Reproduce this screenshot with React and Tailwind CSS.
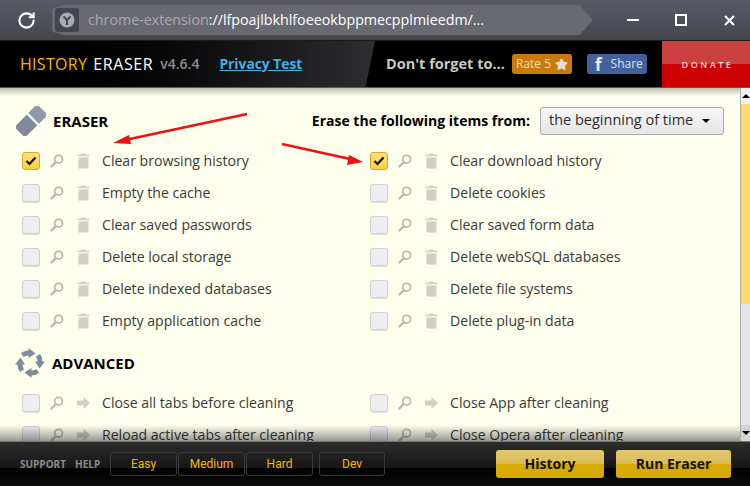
import React from "react";
import { RotateCw, Star } from "lucide-react";

const eraserItems = [
  ["Clear browsing history", "Clear download history"],
  ["Empty the cache", "Delete cookies"],
  ["Clear saved passwords", "Clear saved form data"],
  ["Delete local storage", "Delete webSQL databases"],
  ["Delete indexed databases", "Delete file systems"],
  ["Empty application cache", "Delete plug-in data"],
];

const advancedItems = [
  ["Close all tabs before cleaning", "Close App after cleaning"],
  ["Reload active tabs after cleaning", "Close Opera after cleaning"],
];

const SearchIcon = () => (
  <svg width="14" height="14" viewBox="0 0 14 14" fill="none" className="shrink-0">
    <circle cx="8.6" cy="5.2" r="3.9" stroke="#b8b8ac" strokeWidth="1.7" />
    <path d="M5.6 8.2L1.4 12.6" stroke="#b8b8ac" strokeWidth="2.2" strokeLinecap="round" />
  </svg>
);

const TrashIcon = () => (
  <svg width="13" height="16" viewBox="0 0 13 16" fill="#cfcfc5" className="shrink-0">
    <path d="M4.5 0.5h4l0.6 1.2h3.4v1.6h-12v-1.6h3.4z" />
    <path d="M1.5 4.4h10v11.1h-10z" />
  </svg>
);

const ArrowIcon = () => (
  <svg width="13" height="14" viewBox="0 0 13 14" fill="#cfcfc5" className="shrink-0">
    <path d="M6.5 1L13 7l-6.500 6V9.500H0v-5h6.500z" />
  </svg>
);

const Checkbox = ({ checked }) =>
  checked ? (
    <div className="flex h-[18px] w-[18px] shrink-0 items-center justify-center rounded-[3px] border border-[#d8a72a] bg-gradient-to-b from-[#ffe27a] to-[#ffcf3c]">
      <svg width="12" height="10" viewBox="0 0 12 10" fill="none">
        <path d="M1.500 5l3 3 6-6.500" stroke="#111" strokeWidth="2.200" />
      </svg>
    </div>
  ) : (
    <div className="h-[18px] w-[18px] shrink-0 rounded-[3px] border border-[#cfcfcf] bg-[#eeeef0] shadow-[0_1px_1px_rgba(0,0,0,0.12)]" />
  );

const Row = ({ label, checked, advanced }) => (
  <div className="flex h-8 w-[348px] items-center">
    <Checkbox checked={checked} />
    <div className="ml-[10px] flex w-[13px] justify-center">
      <SearchIcon />
    </div>
    <div className="ml-[14px] flex w-[13px] justify-center">
      {advanced ? <ArrowIcon /> : <TrashIcon />}
    </div>
    <span className="ml-3 whitespace-nowrap pt-px text-[14.1px] leading-none text-[#3a3a3a]">
      {label}
    </span>
  </div>
);

const EraserIcon = () => (
  <svg width="30" height="30" viewBox="0 0 30 30" className="shrink-0">
    <g transform="rotate(-45 15 15)">
      <rect x="-1" y="7.500" width="32" height="15" rx="3" fill="#7f8b9c" />
      <rect x="18.400" y="7.500" width="12.600" height="15" rx="3" fill="#8e99a9" />
      <rect x="16.500" y="6.500" width="2.200" height="17" fill="#fffff0" />
    </g>
  </svg>
);

const CycleIcon = () => (
  <svg width="32" height="32" viewBox="0 0 32 32" fill="#7d8b9c" className="shrink-0">
    {[0, 90, 180, 270].map((angle) => (
      <path
        key={angle}
        transform={`rotate(${angle} 16 16)`}
        d="M7 6Q10 3.500 14.500 3.500L14.500 1L21.500 6.500L14.500 11L14.500 8.500Q12 8.500 9.500 10z"
      />
    ))}
  </svg>
);

const BrowserBar = () => (
  <div className="flex h-10 items-center bg-gradient-to-b from-[#5a5a64] to-[#45454f]">
    <div className="flex w-[52px] justify-center">
      <RotateCw size={19} color="#ffffff" strokeWidth={2.600} />
    </div>
    <div className="flex h-[30px] w-[541px] items-center bg-[#696972] pl-[3px] [clip-path:polygon(0_12%,2%_0,97.500%_0,100%_50%,97.500%_100%,2%_100%,0_88%)]">
      <div className="flex h-6 w-6 items-center justify-center rounded-[3px] bg-[#44454f]">
        <svg width="16" height="16" viewBox="0 0 16 16">
          <circle cx="8" cy="8" r="7.500" fill="#a9aab2" />
          <path d="M4.500 4.500L8 8l3.500-3.500M8 8v5" stroke="#44454f" strokeWidth="2" fill="none" />
        </svg>
      </div>
      <span className="ml-[9px] whitespace-nowrap text-[14.25px] leading-none text-[#a9a9b0]">
        chrome-extension
        <span className="text-white">://lfpoajlbkhlfoeeokbppmecpplmieedm/...</span>
      </span>
    </div>
    <div className="ml-[34px] h-[2px] w-3 bg-white" />
    <div className="ml-9 h-3 w-3 border-2 border-white" />
    <svg width="11" height="11" viewBox="0 0 11 11" className="ml-[37px]">
      <path d="M1 1l9 9M10 1l-9 9" stroke="#fff" strokeWidth="2" />
    </svg>
  </div>
);

const Header = () => (
  <div className="flex h-12 items-stretch border-t border-b border-t-[#1c1c1c] border-b-[#5a5a5a] bg-black">
    <div className="flex w-[375px] items-center bg-gradient-to-r from-black to-[#2e2e32] pl-5 [clip-path:polygon(0_0,100%_0,97.500%_100%,0_100%)]">
      <span className="whitespace-nowrap text-[16px] leading-none tracking-[0.3px] text-[#f2b800]">HISTORY</span>
      <span className="ml-[6px] whitespace-nowrap text-[16px] leading-none tracking-[0.6px] text-white">ERASER</span>
      <span className="ml-[7px] whitespace-nowrap text-[14px] font-semibold leading-none text-[#8e8e8e]">v4.6.4</span>
      <a className="ml-5 whitespace-nowrap text-[13.8px] font-bold leading-none text-[#3fb1e3] underline">Privacy Test</a>
    </div>
    <div className="flex flex-1 items-center">
      <span className="ml-[11px] w-[126px] whitespace-nowrap text-[14.5px] font-bold leading-none text-[#c9c9bd]">Don't forget to...</span>
      <div className="flex h-5 w-[60px] items-center justify-center gap-1 rounded-[3px] bg-[#c87a0c] text-[12px] leading-none text-[#f1dcb6]">
        Rate 5
        <Star size={13} fill="#eadfce" color="#eadfce" />
      </div>
      <div className="ml-[15px] flex h-5 w-[60px] items-center rounded-[3px] bg-[#41609c] pl-2 text-[12px] leading-none text-[#dbe3f0]">
        <span className="text-[17px] font-bold leading-none text-[#e8edf5]">f</span>
        <span className="ml-[9px]">Share</span>
      </div>
      <div className="ml-[15px] flex h-full w-[88px] items-center justify-center bg-[linear-gradient(to_bottom,#cc4040_50%,#cc0000_50%)] pl-[3px] text-[9px] font-semibold leading-none tracking-[2.5px] text-[#ecdcdc]">
        DONATE
      </div>
    </div>
  </div>
);

const Scrollbar = () => (
  <div className="flex w-[10px] shrink-0 flex-col border-l border-[#b0b0b0] bg-[#e6e6e6]">
    <div className="flex h-4 items-center justify-center bg-[#f0f0f0]">
      <div className="h-0 w-0 border-x-[4px] border-b-[4px] border-x-transparent border-b-black" />
    </div>
    <div className="h-[200px] bg-[#ffd966]" />
    <div className="flex-1" />
    <div className="flex h-4 items-center justify-center bg-[#d4d4d4]">
      <div className="h-0 w-0 border-x-[4px] border-t-[4px] border-x-transparent border-t-black" />
    </div>
  </div>
);

const Content = () => (
  <div className="relative flex h-[353px] overflow-hidden bg-[#ffffee]">
    <div className="min-w-0 flex-1 overflow-hidden">
      <div className="flex h-[57px] items-center pt-[8px] pr-4 pl-4">
        <EraserIcon />
        <span className="ml-[7px] pt-px text-[15px] font-bold leading-none text-black">ERASER</span>
        <span className="ml-auto whitespace-nowrap text-[14px] font-bold leading-none text-black">
          Erase the following items from:
        </span>
        <div className="ml-[10px] flex h-[28px] w-[184px] shrink-0 items-center justify-between whitespace-nowrap rounded-[3px] border border-[#ababab] bg-gradient-to-b from-[#f6f6f6] to-[#e6e6e6] pr-[13px] pl-2 text-[14.5px] leading-none text-[#2c2c2c]">
          the beginning of time
          <div className="h-0 w-0 border-x-[4px] border-t-[4px] border-x-transparent border-t-black" />
        </div>
      </div>
      <div className="pl-[22px]">
        {eraserItems.map((pair, i) => (
          <div key={i} className="flex">
            <Row label={pair[0]} checked={i === 0} />
            <Row label={pair[1]} checked={i === 0} />
          </div>
        ))}
      </div>
      <div className="mt-[10px] flex h-8 items-center pl-[14px]">
        <CycleIcon />
        <span className="ml-[6px] text-[15px] font-bold leading-none text-black">ADVANCED</span>
      </div>
      <div className="mt-[8px] pl-[22px]">
        {advancedItems.map((pair, i) => (
          <div key={i} className="flex">
            <Row label={pair[0]} advanced />
            <Row label={pair[1]} advanced />
          </div>
        ))}
      </div>
    </div>
    <Scrollbar />
    {/* shadows from header and footer */}
    <div className="pointer-events-none absolute top-0 left-0 h-2 w-[740px] bg-gradient-to-b from-black/25 to-transparent" />
    <div className="pointer-events-none absolute bottom-0 left-0 h-4 w-[740px] bg-gradient-to-t from-black/40 to-transparent" />
    {/* red arrows drawn on the screenshot */}
    <svg className="pointer-events-none absolute top-0 left-0" width="400" height="90" viewBox="0 0 400 90">
      <path d="M247 26L125 52" stroke="#ee1111" strokeWidth="2.500" />
      <path d="M113 55l16-8 2 9z" fill="#ee1111" />
      <path d="M282 56L350 71" stroke="#ee1111" strokeWidth="2.500" />
      <path d="M363 74l-16 3 2-10z" fill="#ee1111" />
    </svg>
  </div>
);

const Footer = () => (
  <div className="flex h-[45px] items-center border-t border-[#777] bg-[linear-gradient(to_bottom,#2c2c2c_0%,#161616_60%,#000_60%,#0c0c0c_100%)] pr-[19px] pl-5">
    <span className="w-[55px] text-[10px] font-bold leading-none text-[#8b8b8b]">SUPPORT</span>
    <span className="w-[35px] text-[10px] font-bold leading-none text-[#8b8b8b]">HELP</span>
    <div className="flex">
      {["Easy", "Medium", "Hard"].map((label) => (
        <div
          key={label}
          className="mr-px flex h-6 w-[67px] items-center justify-center rounded-[3px] border border-[#3a3a3a] font-['Roboto',sans-serif] text-[12px] leading-none text-[#f2b800]"
        >
          {label}
        </div>
      ))}
    </div>
    <div className="ml-[5px] flex h-6 w-[66px] items-center justify-center rounded-[3px] border border-[#3a3a3a] font-['Roboto',sans-serif] text-[12px] leading-none text-[#f2b800]">
      Dev
    </div>
    <div className="ml-auto flex h-[28px] w-[108px] items-center justify-center rounded-[3px] bg-[linear-gradient(to_bottom,#e2c76e_0%,#dcbc55_50%,#d6aa00_50%,#d6aa00_100%)] text-[14px] font-bold leading-none text-[#111]">
      History
    </div>
    <div className="ml-3 flex h-[28px] w-[115px] items-center justify-center rounded-[3px] bg-[linear-gradient(to_bottom,#e2c76e_0%,#dcbc55_50%,#d6aa00_50%,#d6aa00_100%)] text-[14px] font-bold leading-none text-[#111]">
      Run Eraser
    </div>
  </div>
);

export default function App() {
  return (
    <div className="h-[486px] w-[750px] overflow-hidden font-['Open_Sans',sans-serif]">
      <BrowserBar />
      <Header />
      <Content />
      <Footer />
    </div>
  );
}
